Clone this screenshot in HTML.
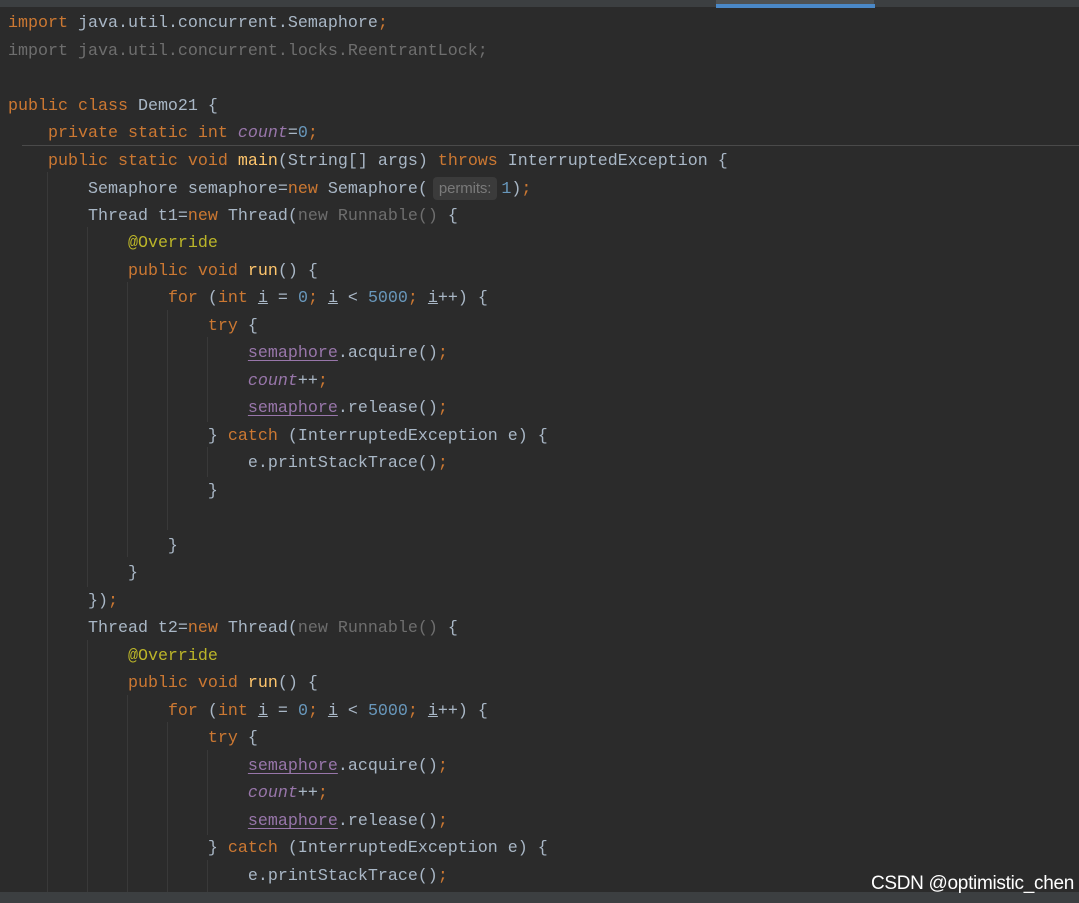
<!DOCTYPE html>
<html><head><meta charset="utf-8"><style>
html,body{margin:0;padding:0;width:1079px;height:903px;overflow:hidden;background:#2b2b2b;}
.top{position:absolute;left:0;top:0;width:1079px;height:7px;background:#3c3f41;}
.tab{position:absolute;left:716px;top:4px;width:159px;height:4px;background:#4a88c7;}
.top2{position:absolute;left:716px;top:0;width:158px;height:4px;background:#4e5254;}
.bot{position:absolute;left:0;top:892px;width:1079px;height:11px;background:#3c3f41;}
.g{position:absolute;width:1px;background:#393939;}
.sep{position:absolute;left:22px;top:145px;width:1057px;height:1px;background:#4a4a4a;}
.l{position:absolute;left:8px;margin-top:2px;white-space:pre;font-family:"Liberation Mono",monospace;font-size:16.67px;line-height:27.5px;color:#a9b7c6;}
.k{color:#cc7832}.n{color:#6897bb}.f{color:#9876aa;font-style:italic}.m{color:#ffc66d}.a{color:#bbb529}
.u{color:#9876aa;text-decoration:underline;text-underline-offset:3px}
.gr{color:#6e6e6e}
.h{background:#3b3b3b;color:#7a7a7a;font-family:"Liberation Sans",sans-serif;font-size:15px;border-radius:4px;padding:3px 6px;margin-left:5px;margin-right:4px;letter-spacing:-0.1px;}
.wm{position:absolute;right:5px;top:873px;font-family:"Liberation Sans",sans-serif;font-size:19px;color:#fff;letter-spacing:-0.3px;}
</style></head><body>
<div class="top"></div><div class="top2"></div><div class="tab"></div>
<div class="g" style="left:47px;top:172px;height:720px"></div>
<div class="g" style="left:87px;top:227px;height:360px"></div>
<div class="g" style="left:87px;top:640px;height:252px"></div>
<div class="g" style="left:127px;top:282px;height:275px"></div>
<div class="g" style="left:127px;top:695px;height:197px"></div>
<div class="g" style="left:167px;top:310px;height:220px"></div>
<div class="g" style="left:167px;top:722px;height:170px"></div>
<div class="g" style="left:207px;top:337px;height:85px"></div>
<div class="g" style="left:207px;top:447px;height:30px"></div>
<div class="g" style="left:207px;top:750px;height:85px"></div>
<div class="g" style="left:207px;top:860px;height:32px"></div>
<div class="sep"></div>
<div class="l" style="top:8px"><span class="k">import</span> java.util.concurrent.Semaphore<span class="k">;</span></div>
<div class="l gr" style="top:36px">import java.util.concurrent.locks.ReentrantLock;</div>
<div class="l" style="top:91px"><span class="k">public class</span> Demo21 {</div>
<div class="l" style="top:118px">    <span class="k">private static int</span> <span class="f">count</span>=<span class="n">0</span><span class="k">;</span></div>
<div class="l" style="top:146px">    <span class="k">public static void</span> <span class="m">main</span>(String[] args) <span class="k">throws</span> InterruptedException {</div>
<div class="l" style="top:173px">        Semaphore semaphore=<span class="k">new</span> Semaphore(<span class="h">permits:</span><span class="n">1</span>)<span class="k">;</span></div>
<div class="l" style="top:201px">        Thread t1=<span class="k">new</span> Thread(<span class="gr">new Runnable()</span> {</div>
<div class="l" style="top:228px">            <span class="a">@Override</span></div>
<div class="l" style="top:256px">            <span class="k">public void</span> <span class="m">run</span>() {</div>
<div class="l" style="top:283px">                <span class="k">for</span> (<span class="k">int</span> <u>i</u> = <span class="n">0</span><span class="k">;</span> <u>i</u> &lt; <span class="n">5000</span><span class="k">;</span> <u>i</u>++) {</div>
<div class="l" style="top:311px">                    <span class="k">try</span> {</div>
<div class="l" style="top:338px">                        <span class="u">semaphore</span>.acquire()<span class="k">;</span></div>
<div class="l" style="top:366px">                        <span class="f">count</span>++<span class="k">;</span></div>
<div class="l" style="top:393px">                        <span class="u">semaphore</span>.release()<span class="k">;</span></div>
<div class="l" style="top:421px">                    } <span class="k">catch</span> (InterruptedException e) {</div>
<div class="l" style="top:448px">                        e.printStackTrace()<span class="k">;</span></div>
<div class="l" style="top:476px">                    }</div>
<div class="l" style="top:531px">                }</div>
<div class="l" style="top:558px">            }</div>
<div class="l" style="top:586px">        })<span class="k">;</span></div>
<div class="l" style="top:613px">        Thread t2=<span class="k">new</span> Thread(<span class="gr">new Runnable()</span> {</div>
<div class="l" style="top:641px">            <span class="a">@Override</span></div>
<div class="l" style="top:668px">            <span class="k">public void</span> <span class="m">run</span>() {</div>
<div class="l" style="top:696px">                <span class="k">for</span> (<span class="k">int</span> <u>i</u> = <span class="n">0</span><span class="k">;</span> <u>i</u> &lt; <span class="n">5000</span><span class="k">;</span> <u>i</u>++) {</div>
<div class="l" style="top:723px">                    <span class="k">try</span> {</div>
<div class="l" style="top:751px">                        <span class="u">semaphore</span>.acquire()<span class="k">;</span></div>
<div class="l" style="top:778px">                        <span class="f">count</span>++<span class="k">;</span></div>
<div class="l" style="top:806px">                        <span class="u">semaphore</span>.release()<span class="k">;</span></div>
<div class="l" style="top:833px">                    } <span class="k">catch</span> (InterruptedException e) {</div>
<div class="l" style="top:861px">                        e.printStackTrace()<span class="k">;</span></div>
<div class="bot"></div>
<div class="wm">CSDN @optimistic_chen</div>
</body></html>
